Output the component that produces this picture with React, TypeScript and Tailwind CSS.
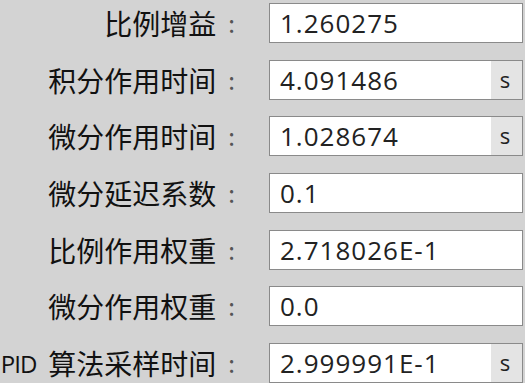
import React from 'react';

interface ParamRow {
  label: string;
  prefix?: string;
  value: string;
  unit?: string;
}

const rows: ParamRow[] = [
  { label: '比例增益', value: '1.260275' },
  { label: '积分作用时间', value: '4.091486', unit: 's' },
  { label: '微分作用时间', value: '1.028674', unit: 's' },
  { label: '微分延迟系数', value: '0.1' },
  { label: '比例作用权重', value: '2.718026E-1' },
  { label: '微分作用权重', value: '0.0' },
  { label: '算法采样时间', prefix: 'PID', value: '2.999991E-1', unit: 's' },
];

const App: React.FC = () => {
  return (
    <div className="w-[525px] h-[383px] overflow-hidden bg-[#d3d3d3] pt-[3px]">
      <div className="flex flex-col gap-[16.67px]">
        {rows.map((row) => (
          <div key={row.label} className="flex items-center h-[40px]">
            {/* подпись */}
            <div className="w-[240px] shrink-0 flex justify-end items-center whitespace-nowrap text-[#111] font-['Noto_Sans_CJK_SC',sans-serif] text-[28px] leading-none">
              {row.prefix && (
                <span className="font-['Open_Sans',sans-serif] text-[24px] tracking-[-1px] mr-[12px] mt-[2px]">
                  {row.prefix}
                </span>
              )}
              <span>{row.label}</span>
              <span className="ml-[12px] mr-[5px] text-[#555] text-[24px]">:</span>
            </div>
            {/* поле ввода */}
            <div className="ml-[29px] w-[254px] h-[40px] shrink-0 flex border border-[#8a8a8a] bg-white">
              <div className="flex-1 flex items-center pl-[10px] font-['Open_Sans',sans-serif] text-[26px] tracking-[1px] text-[#222] leading-none">
                {row.value}
              </div>
              {row.unit && (
                <div className="w-[31px] flex items-center justify-center bg-[#e4e4e4] font-['Open_Sans',sans-serif] text-[22px] text-[#222] leading-none pb-[2px] pr-[3px]">
                  {row.unit}
                </div>
              )}
            </div>
          </div>
        ))}
      </div>
    </div>
  );
};

export default App;
